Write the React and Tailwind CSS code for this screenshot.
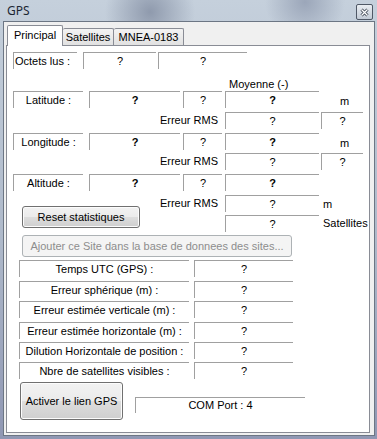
import React from "react";

const Box = ({ w, bold, left, children, className = "" }) => (
  <div
    className={`flex h-[17px] shrink-0 items-center border-l border-t border-[#a0a0a0] ${
      left ? "justify-start pl-[1px]" : "justify-center"
    } ${bold ? "font-bold" : ""} ${w} ${className}`}
  >
    {children}
  </div>
);

const Btn = ({ w, h, disabled, children, className = "" }) => (
  <div
    className={`flex shrink-0 items-center justify-center rounded-[3px] border ${
      disabled
        ? "border-[#adb2b5] bg-[#f4f4f4] text-[#8d8d8d]"
        : "border-[#707070] bg-[linear-gradient(180deg,#f2f2f2_0%,#ebebeb_50%,#dddddd_51%,#cfcfcf_100%)] shadow-[inset_0_0_0_1px_#fcfcfc]"
    } ${w} ${h} ${className}`}
  >
    {children}
  </div>
);

const PosRow = ({ label, m }) => (
  <div className="flex h-[17px] items-start">
    <Box w="w-[70px] ml-[6px]">{label}</Box>
    <Box w="w-[91px] ml-[6px]" bold>?</Box>
    <Box w="w-[39px] ml-[3px]">?</Box>
    <Box w="w-[94px] ml-[3px]" bold>?</Box>
    {m && <span className="ml-[21px] mt-[4px]">m</span>}
  </div>
);

const RmsRow = ({ className = "" }) => (
  <div className={`flex h-[17px] items-start ${className}`}>
    <div className="flex h-[17px] w-[211px] items-center justify-end">Erreur RMS</div>
    <Box w="w-[94px] ml-[7px]">?</Box>
    <Box w="w-[42px] ml-[2px]">?</Box>
  </div>
);

const InfoRow = ({ label, className = "" }) => (
  <div className={`flex h-[17px] ${className}`}>
    <Box w="w-[170px] ml-[12px]">{label}</Box>
    <Box w="w-[99px] ml-[5px]">?</Box>
  </div>
);

const App = () => {
  return (
    <div className="h-[439px] w-[377px] overflow-hidden bg-[radial-gradient(circle_at_150px_12px,#8f9aad_0px,transparent_45px),radial-gradient(circle_at_305px_2px,#9ba6b9_0px,transparent_40px),linear-gradient(180deg,#c5d0dc_0%,#aeb9ca_55%,#8f97b3_100%)] font-['Liberation_Sans',Arial,sans-serif] text-[11px] leading-[13px] text-black">
      {/* title bar */}
      <div className="flex h-[21px] items-start justify-between pl-[7px] pr-[4px]">
        <span className="mt-[3px] font-['Noto_Sans',sans-serif] text-[12px] leading-[16px] text-[#1b2633]">
          GPS
        </span>
        <div className="mt-[4px] flex h-[16px] w-[17px] items-center justify-center rounded-[2px] border border-[#4f5866] bg-[linear-gradient(180deg,#e9edf2,#c3cbd6)]">
          <svg width="9" height="9" viewBox="0 0 9 9">
            <path d="M1.5 1.5 L7.5 7.5 M7.5 1.5 L1.5 7.5" stroke="#3c4552" strokeWidth="3" />
            <path d="M1.5 1.5 L7.5 7.5 M7.5 1.5 L1.5 7.5" stroke="#ffffff" strokeWidth="1.3" />
          </svg>
        </div>
      </div>

      {/* window body */}
      <div className="ml-[3px] h-[415px] w-[372px] border border-[#6c7684] bg-[#f0f0f0] pl-[2px]">
        {/* tabs */}
        <div className="mt-[3px] flex h-[20px] items-end pl-[1px]">
          <div className="relative z-10 -mb-px flex h-[21px] w-[56px] items-center justify-center rounded-t-[2px] border border-b-0 border-[#898c95] bg-white pb-[1px]">
            Principal
          </div>
          <div className="flex h-[17px] w-[51px] items-center justify-center rounded-t-[2px] border border-b-0 border-l-0 border-[#898c95] bg-[linear-gradient(180deg,#f3f3f3,#e1e1e1)]">
            Satellites
          </div>
          <div className="flex h-[17px] w-[70px] items-center justify-center rounded-t-[2px] border border-b-0 border-l-0 border-[#898c95] bg-[linear-gradient(180deg,#f3f3f3,#e1e1e1)]">
            MNEA-0183
          </div>
        </div>

        {/* panel */}
        <div className="h-[388px] w-[364px] border border-[#898c95] bg-white">
          <div className="mt-[6px] flex h-[17px]">
            <Box w="w-[64px] ml-[6px]" left>Octets lus :</Box>
            <Box w="w-[73px] ml-[6px]">?</Box>
            <Box w="w-[89px] ml-[2px]">?</Box>
          </div>
          <div className="ml-[222px] mt-[9px] h-[13px]">Moyenne (-)</div>

          <PosRow label="Latitude :" m />
          <RmsRow className="mt-[4px]" />
          <div className="mt-[4px]">
            <PosRow label="Longitude :" m />
          </div>
          <RmsRow className="mt-[3px]" />
          <div className="mt-[4px]">
            <PosRow label="Altitude :" />
          </div>

          <div className="mt-[4px] flex items-start">
            <div className="flex w-[211px] items-start">
              <div className="pl-[15px] pt-[11px]">
                <Btn w="w-[118px]" h="h-[22px]">Reset statistiques</Btn>
              </div>
              <div className="flex h-[17px] flex-1 items-center justify-end">Erreur RMS</div>
            </div>
            <div className="ml-[7px] flex flex-col">
              <div className="flex h-[17px] items-start">
                <Box w="w-[94px]">?</Box>
                <span className="ml-[4px] mt-[3px]">m</span>
              </div>
              <div className="mt-[3px] flex h-[17px] items-start">
                <Box w="w-[94px]">?</Box>
                <span className="ml-[4px] mt-[2px]">Satellites</span>
              </div>
            </div>
          </div>

          <Btn w="w-[270px]" h="h-[22px]" disabled className="ml-[15px] mt-[3px]">
            Ajouter ce Site dans la base de donnees des sites...
          </Btn>

          <InfoRow label="Temps UTC (GPS) :" className="mt-[3px]" />
          <InfoRow label="Erreur sphérique (m) :" className="mt-[4px]" />
          <InfoRow label="Erreur estimée verticale (m) :" className="mt-[3px]" />
          <InfoRow label="Erreur estimée horizontale (m) :" className="mt-[4px]" />
          <InfoRow label="Dilution Horizontale de position :" className="mt-[3px]" />
          <InfoRow label="Nbre de satellites visibles :" className="mt-[3px]" />

          <div className="mt-[3px] flex items-start">
            <Btn w="w-[103px]" h="h-[38px]" className="ml-[13px]">Activer le lien GPS</Btn>
            <div className="ml-[12px] mt-[15px] flex h-[16px] w-[170px] items-center justify-center border-l border-t border-[#a0a0a0]">
              COM Port : 4
            </div>
          </div>
        </div>
      </div>
    </div>
  );
};

export default App;
